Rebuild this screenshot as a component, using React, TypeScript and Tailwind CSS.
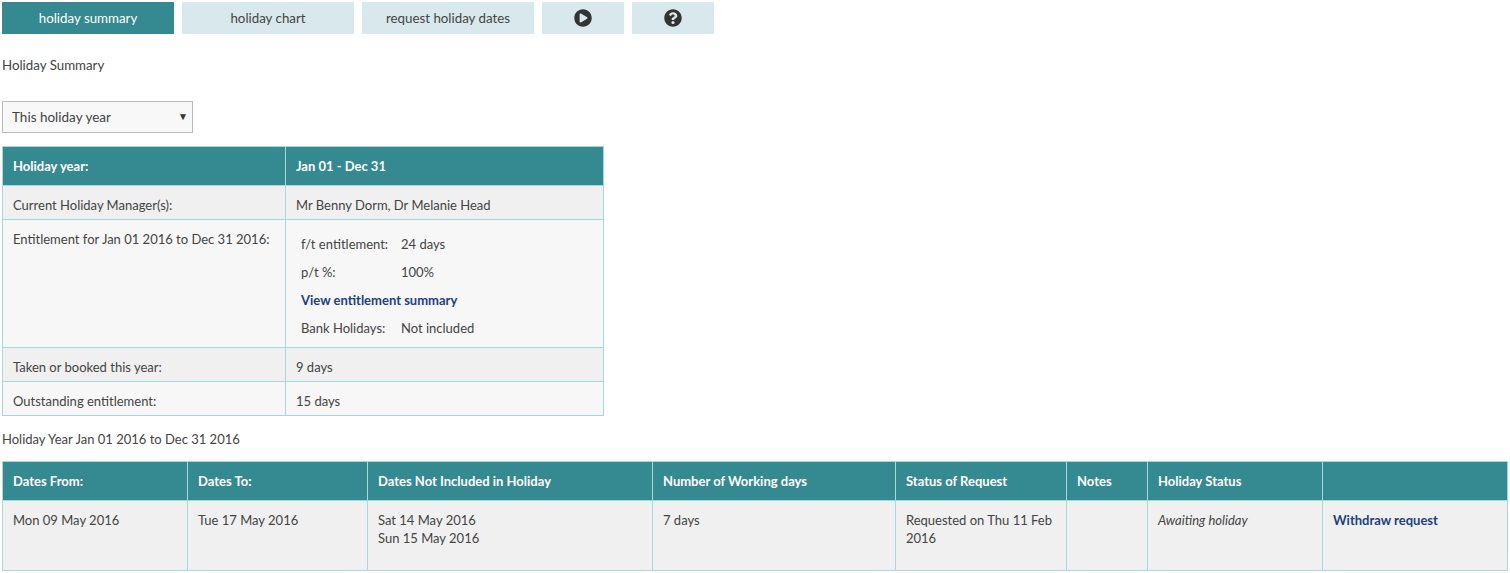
import { FaPlayCircle, FaQuestionCircle } from "react-icons/fa";

const TH = "h-[39px] border border-[#a5d9de] bg-[#358991] px-[10px] text-left align-middle font-bold text-white";
const TD = "border border-[#a5d9de] px-[10px] pt-[10px] align-top";

const TABS = [
  { label: "holiday summary", active: true },
  { label: "holiday chart" },
  { label: "request holiday dates" },
];

const COLUMNS = [
  { title: "Dates From:", width: "w-[185px]" },
  { title: "Dates To:", width: "w-[180px]" },
  { title: "Dates Not Included in Holiday", width: "w-[285px]" },
  { title: "Number of Working days", width: "w-[243px]" },
  { title: "Status of Request", width: "w-[171px]" },
  { title: "Notes", width: "w-[81px]" },
  { title: "Holiday Status", width: "w-[175px]" },
  { title: "", width: "w-[185px]" },
];

const App = () => {
  return (
    <div className="min-h-[573px] bg-white px-[2px] pt-[2px] font-['Lato',sans-serif] text-[13px] leading-[18px] text-[#444444]">
      <div className="flex gap-2 text-[13.3px]">
        {TABS.map((tab) => (
          <button
            key={tab.label}
            className={
              tab.active
                ? "h-8 w-[172px] bg-[#358991] text-white"
                : "h-8 w-[172px] bg-[#d9e8ec] text-[#444444]"
            }
          >
            {tab.label}
          </button>
        ))}
        <button className="flex h-8 w-[82px] items-center justify-center bg-[#d9e8ec] text-[#333333]">
          <FaPlayCircle size={18} />
        </button>
        <button className="flex h-8 w-[82px] items-center justify-center bg-[#d9e8ec] text-[#333333]">
          <FaQuestionCircle size={18} />
        </button>
      </div>

      <p className="mt-[22px] text-[13.3px]">Holiday Summary</p>

      <div className="relative mt-[27px] h-8 w-[191px]">
        <select className="h-full w-full appearance-none border border-[#bbbbbb] bg-[#f8f8f8] pl-[9px] text-[13.5px] text-[#444444]">
          <option>This holiday year</option>
        </select>
        <span className="absolute right-[5px] top-[6px] text-[10px] text-[#333333]">▼</span>
      </div>

      <table className="mt-[13px] w-[602px] table-fixed border-collapse">
        <colgroup>
          <col className="w-[283px]" />
          <col />
        </colgroup>
        <tbody>
          <tr>
            <th className={TH}>Holiday year:</th>
            <th className={TH}>Jan 01 - Dec 31</th>
          </tr>
          <tr className="h-[34px] bg-[#f0f0f0]">
            <td className={TD}>Current Holiday Manager(s):</td>
            <td className={TD}>Mr Benny Dorm, Dr Melanie Head</td>
          </tr>
          <tr className="h-[128px] bg-[#f7f7f7]">
            <td className={TD}>Entitlement for Jan 01 2016 to Dec 31 2016:</td>
            <td className="border border-[#a5d9de] px-[15px] pt-[15px] align-top">
              <div className="grid grid-cols-[100px_1fr] gap-y-[10px]">
                <span>f/t entitlement:</span>
                <span>24 days</span>
                <span>p/t %:</span>
                <span>100%</span>
                <a className="col-span-2 font-bold text-[#1c3f84]">View entitlement summary</a>
                <span>Bank Holidays:</span>
                <span>Not included</span>
              </div>
            </td>
          </tr>
          <tr className="h-[34px] bg-[#f0f0f0]">
            <td className={TD}>Taken or booked this year:</td>
            <td className={TD}>9 days</td>
          </tr>
          <tr className="h-[34px] bg-[#f7f7f7]">
            <td className={TD}>Outstanding entitlement:</td>
            <td className={TD}>15 days</td>
          </tr>
        </tbody>
      </table>

      <p className="mt-[14px]">Holiday Year Jan 01 2016 to Dec 31 2016</p>

      <table className="mt-[13px] w-[1506px] table-fixed border-collapse">
        <thead>
          <tr>
            {COLUMNS.map((col) => (
              <th key={col.title} className={`${TH} ${col.width}`}>
                {col.title}
              </th>
            ))}
          </tr>
        </thead>
        <tbody>
          <tr className="h-[70px] bg-[#f0f0f0]">
            <td className={TD}>Mon 09 May 2016</td>
            <td className={TD}>Tue 17 May 2016</td>
            <td className={TD}>
              Sat 14 May 2016
              <br />
              Sun 15 May 2016
            </td>
            <td className={TD}>7 days</td>
            <td className={TD}>Requested on Thu 11 Feb 2016</td>
            <td className={TD}></td>
            <td className={`${TD} italic`}>Awaiting holiday</td>
            <td className={`${TD} font-bold text-[#1c3f84]`}>Withdraw request</td>
          </tr>
        </tbody>
      </table>
    </div>
  );
};

export default App;
